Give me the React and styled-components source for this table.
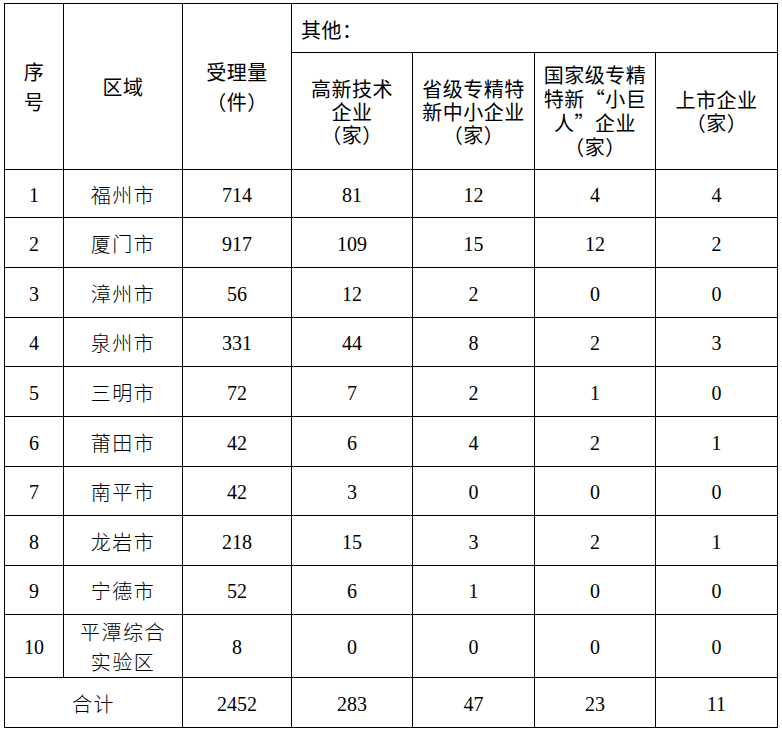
import React from "react";
import styled, { createGlobalStyle } from "styled-components";

const Global = createGlobalStyle`
  html, body { margin: 0; padding: 0; background: #fff; }
  body { font-family: "Noto Sans CJK SC", sans-serif; color: #000; }
`;

const Page = styled.div`
  padding: 3px 0 0 4px;
`;

const Table = styled.table`
  border-collapse: collapse;
  table-layout: fixed;
  width: 774px;
`;

const Row = styled.tr`
  height: ${(p) => p.$h}px;
`;

const HeadCell = styled.th`
  border: 1px solid #000;
  padding: 0;
  font-family: "Noto Sans CJK SC", sans-serif;
  font-weight: 400;
  font-size: 20px;
  line-height: ${(p) => p.$lh || 23}px;
  text-align: ${(p) => (p.$left ? "left" : "center")};
  padding-left: ${(p) => (p.$left ? "9px" : "0")};
  padding-top: ${(p) => p.$pt || 0}px;
  vertical-align: middle;
  letter-spacing: 0.5px;
`;

const Cell = styled.td`
  border: 1px solid #000;
  padding: 0;
  padding-top: 2px;
  text-align: center;
  vertical-align: middle;
  font-size: 20px;
  line-height: 30px;
  font-family: ${(p) =>
    p.$cjk
      ? `"Noto Sans CJK SC", sans-serif`
      : `"Liberation Serif", "DejaVu Serif", serif`};
  font-weight: ${(p) => (p.$cjk ? 300 : 400)};
  letter-spacing: ${(p) => (p.$cjk ? "1.5px" : "0")};
`;

const cols = [59, 119, 109, 121, 122, 121, 122];

const data = [
  ["1", "福州市", "714", "81", "12", "4", "4", 48],
  ["2", "厦门市", "917", "109", "15", "12", "2", 50],
  ["3", "漳州市", "56", "12", "2", "0", "0", 50],
  ["4", "泉州市", "331", "44", "8", "2", "3", 49],
  ["5", "三明市", "72", "7", "2", "1", "0", 50],
  ["6", "莆田市", "42", "6", "4", "2", "1", 50],
  ["7", "南平市", "42", "3", "0", "0", "0", 49],
  ["8", "龙岩市", "218", "15", "3", "2", "1", 50],
  ["9", "宁德市", "52", "6", "1", "0", "0", 49],
];

export default function App() {
  return (
    <>
      <Global />
      <Page>
        <Table>
          <colgroup>
            {cols.map((w, i) => (
              <col key={i} style={{ width: w }} />
            ))}
          </colgroup>
          <thead>
            <Row $h={49}>
              <HeadCell rowSpan={2} $lh={30}>
                序<br />号
              </HeadCell>
              <HeadCell rowSpan={2}>区域</HeadCell>
              <HeadCell rowSpan={2} $lh={30}>
                受理量<br />（件）
              </HeadCell>
              <HeadCell colSpan={4} $left $pt={3}>
                其他：
              </HeadCell>
            </Row>
            <Row $h={117}>
              <HeadCell>
                高新技术<br />企业<br />（家）
              </HeadCell>
              <HeadCell>
                省级专精特<br />新中小企业<br />（家）
              </HeadCell>
              <HeadCell $lh={24}>
                国家级专精<br />特新“小巨<br />人”企业<br />（家）
              </HeadCell>
              <HeadCell>
                上市企业<br />（家）
              </HeadCell>
            </Row>
          </thead>
          <tbody>
            {data.map((r) => (
              <Row key={r[0]} $h={r[7]}>
                <Cell>{r[0]}</Cell>
                <Cell $cjk>{r[1]}</Cell>
                <Cell>{r[2]}</Cell>
                <Cell>{r[3]}</Cell>
                <Cell>{r[4]}</Cell>
                <Cell>{r[5]}</Cell>
                <Cell>{r[6]}</Cell>
              </Row>
            ))}
            <Row $h={61}>
              <Cell>10</Cell>
              <Cell $cjk>
                平潭综合<br />实验区
              </Cell>
              <Cell>8</Cell>
              <Cell>0</Cell>
              <Cell>0</Cell>
              <Cell>0</Cell>
              <Cell>0</Cell>
            </Row>
            <Row $h={50}>
              <Cell colSpan={2} $cjk>
                合计
              </Cell>
              <Cell>2452</Cell>
              <Cell>283</Cell>
              <Cell>47</Cell>
              <Cell>23</Cell>
              <Cell>11</Cell>
            </Row>
          </tbody>
        </Table>
      </Page>
    </>
  );
}
